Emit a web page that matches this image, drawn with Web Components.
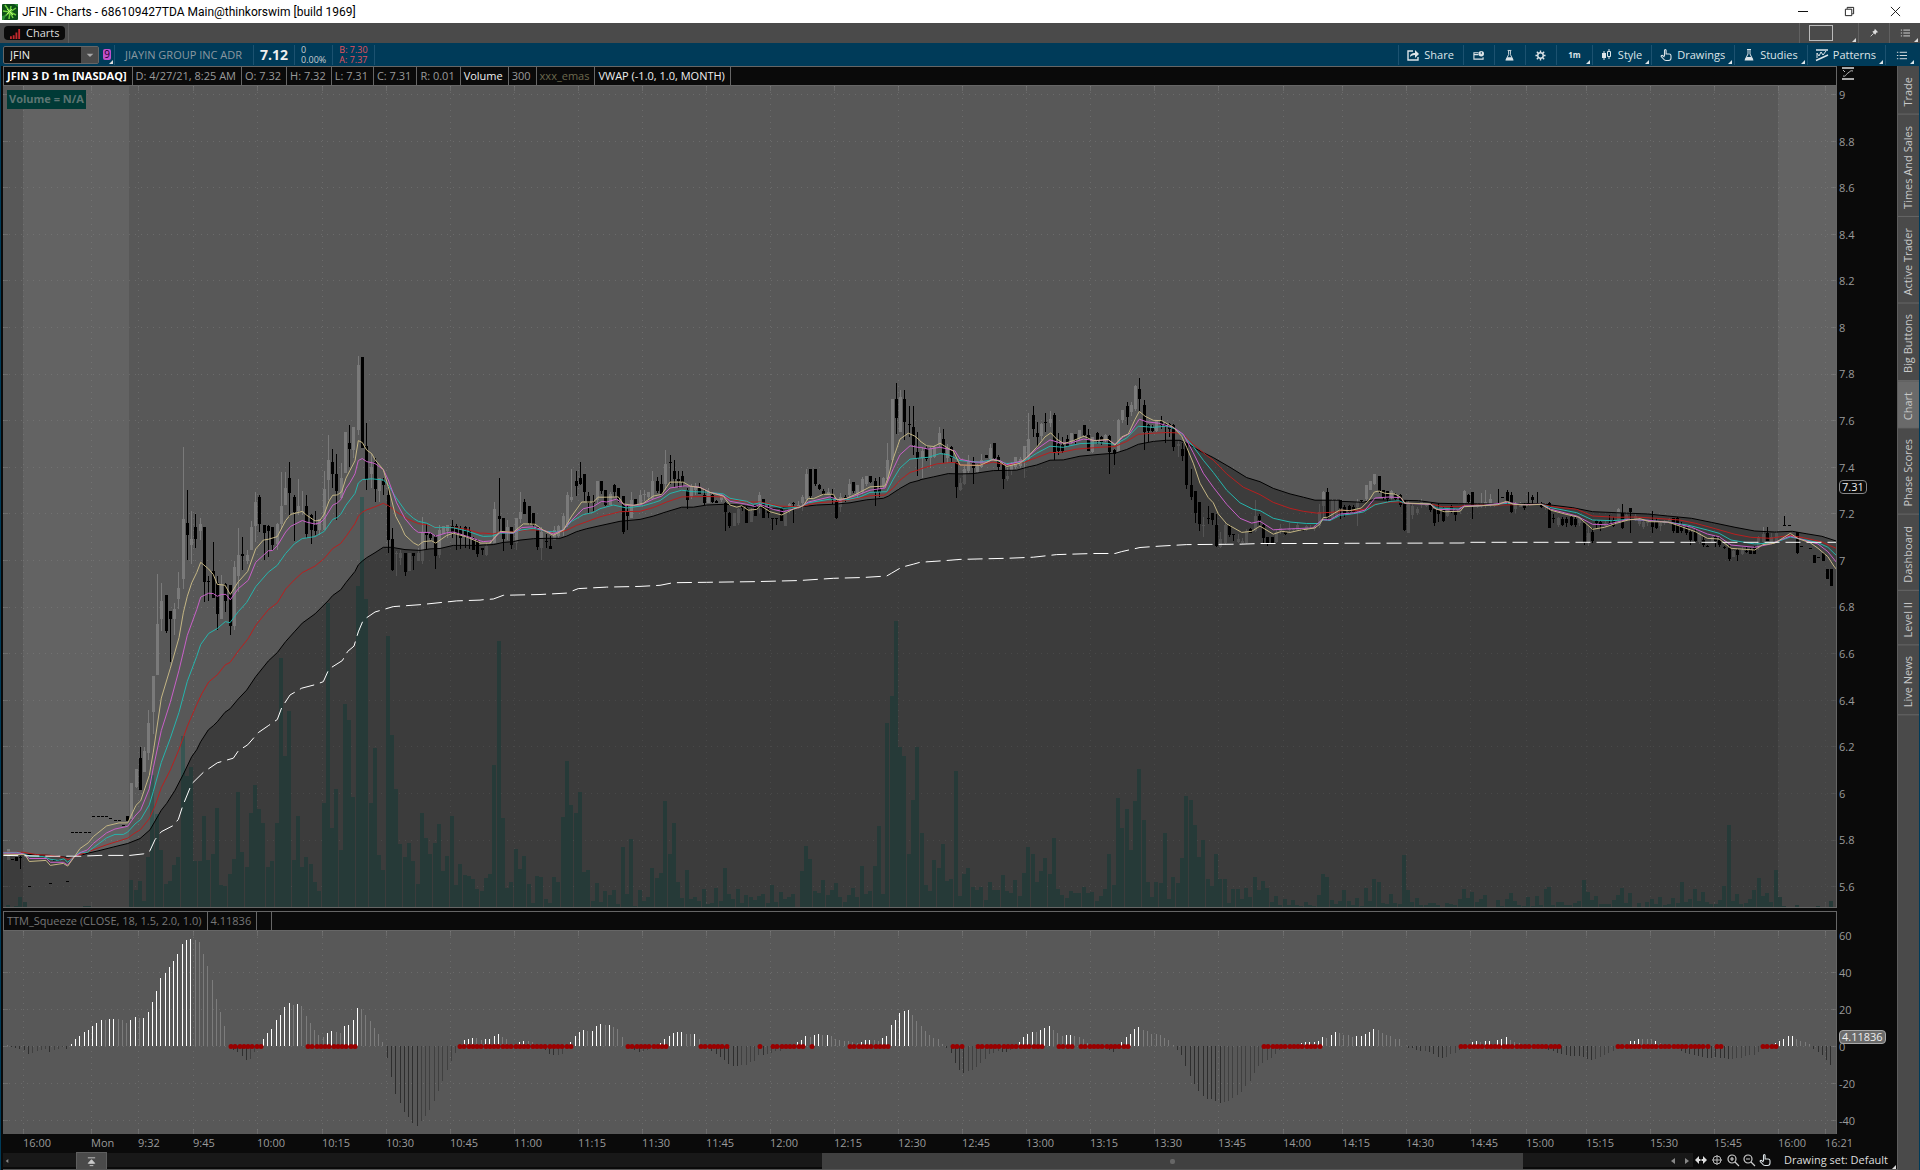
<!DOCTYPE html>
<html lang="en">
<head>
<meta charset="utf-8">
<title>JFIN - Charts</title>
<style>
  html, body { margin: 0; height: 100%; background: #0a0a0a; }
  body { font: 11px/14px "Open Sans", "Noto Sans", sans-serif; color: #9a9a9a; overflow: hidden; }
</style>
</head>
<body>
<trade-window></trade-window>

<script>
const ICONS = {
  logo: '<rect width="16" height="16" rx="1" fill="#0d4f18"/><path d="M8 8 3 1M8 8l1-6M8 8l6-4M8 8l6 3M8 8l3 6M8 8l-1 7M8 8l-5 4M8 8 1 7" stroke="#6fd23f" stroke-width="1.500"/><path d="M5 5l6 6M10 5l-5 5" stroke="#b9f27a" stroke-width="1"/><path d="M0 12l4-1-2 5H0zM12 0h4v3z" fill="#2b8f35"/>',
  bars: '<path d="M1 12v-3M4 12V8M7 12V5M10 12V1" stroke="#c2282d" stroke-width="2"/>',
  share: '<path d="M6 2H1v9h10V8" fill="none" stroke="#dce4e8" stroke-width="1.4"/><path d="M3 8c0-3 2-4 5-4V1l4 4-4 4V6C5 6 4 7 3 8z" fill="#dce4e8"/>',
  link: '<path d="M6 3H1v7h10V8M1 5h5" fill="none" stroke="#dce4e8" stroke-width="1.200"/><circle cx="9" cy="4" r="3" fill="#dce4e8"/><path d="M9 2v2.500" stroke="#003b59"/>',
  flask: '<path d="M4 .5h4M5 1v4L2.200 10.500h7.600L7 5V1" fill="none" stroke="#dce4e8"/><path d="M3.500 8h5l2 3.500h-9z" fill="#dce4e8"/>',
  gear: '<circle cx="6" cy="6" r="3" fill="none" stroke="#dce4e8" stroke-width="1.600"/><path d="M6 .5v2M6 9.500v2M.5 6h2M9.500 6h2M2 2l1.500 1.500M8.500 8.500 10 10M2 10l1.500-1.500M8.500 3.500 10 2" stroke="#dce4e8" stroke-width="1.500"/>',
  candles: '<path d="M3 2v9M8 0v10" stroke="#dce4e8"/><path d="M1 4h4v5H1z" fill="#dce4e8"/><path d="M6.500 2.500h3v5h-3z" fill="#003b59" stroke="#dce4e8"/>',
  hand: '<path d="M4.500 7V1.500q0-1 .8-1t.8 1V5h3q1.900 0 1.900 1.800V9q0 2.500-2.500 2.500H6Q4.500 11.500 3.500 10L1.200 7.500Q1 6.300 2.200 6.300L4.500 8" fill="none" stroke="#dce4e8" stroke-width="1.1"/>',
  patterns: '<path d="M0 1h12M0 11.500 12 6" stroke="#dce4e8" stroke-width="1.400"/><path d="M1 9V4l2 3 2-4 2 3 3-4" fill="none" stroke="#dce4e8"/>',
  menu: '<path d="M4 2.500h8M4 6h8M4 9.500h8" stroke="#e8e8e8"/><path d="M1 2.500h1.500M1 6h1.500M1 9.500h1.500" stroke="#e8e8e8"/>',
  pin: '<path d="M7 1l4 4-2 .5L7.500 8 4 4.500 6.500 3z" fill="#ddd"/><path d="M5.500 6.500 2 10" stroke="#ddd"/>',
  scale: '<path d="M0 1h12" stroke="#ddd" stroke-width="1.500"/><path d="M0 12h12" stroke="#aaa" stroke-width="2"/><path d="M1 9c3 1 3-2 5-3s2-3 5-2M1 3l2 2" fill="none" stroke="#bbb"/>',
  min: '<path d="M1 5.500h10" stroke="#111"/>',
  restore: '<path d="M1.500 3.500h7v7h-7zM3.500 3V1.500h7v7H9" fill="none" stroke="#111"/>',
  close: '<path d="M1 1l10 10M11 1 1 11" stroke="#111"/>',
  top: '<path d="M2 2h8M6 4 2.500 8h7zM4 10.500h4" stroke="#ccc" fill="#ccc"/>',
  expand: '<path d="M0 6l4-4v3h4V2l4 4-4 4V7H4v3z" fill="#ddd"/><path d="M6 2v8" stroke="#0a0a0a"/>',
  cross: '<circle cx="6" cy="6" r="4" fill="none" stroke="#bbb"/><path d="M6 1v10M1 6h10" stroke="#bbb"/>',
  zoomin: '<circle cx="5" cy="5" r="4" fill="none" stroke="#ccc" stroke-width="1.200"/><path d="M8 8l4 4M3 5h4M5 3v4" stroke="#ccc" stroke-width="1.200"/>',
  zoomout: '<circle cx="5" cy="5" r="4" fill="none" stroke="#ccc" stroke-width="1.200"/><path d="M8 8l4 4M3 5h4" stroke="#ccc" stroke-width="1.200"/>',
  left: '<path d="M8 3v6L4 6z" fill="#888"/>',
  right: '<path d="M4 3v6l4-3z" fill="#888"/>',
  down: '<path d="M1 4h10L6 9z" fill="#a8a8a8"/>'
};
const icon = (name, size = 12) =>
  `<svg class="icon" width="${size}" height="${size}" viewBox="0 0 ${name === 'logo' ? '16 16' : '12 12'}" aria-hidden="true">${ICONS[name]}</svg>`;

const BASE = `
  * { box-sizing: border-box; }
  button, input { font: inherit; color: inherit; background: none; border: 0; border-radius: 0; padding: 0; margin: 0; }
  .icon { display: block; flex: none; overflow: visible; }
`;

// ---- chart data -------------------------------------------------------
// Each block has its own origin (x, y) and scale (kx, ky).
// candles: "side x high top bottom low", g = up, b = down. volume: "x top".
const BLOCKS = [
  {
    x: 0, y: 320, kx: 3, ky: 2.613,
    black: '10,1396 80,1396 150,1399 200,1404 240,1399 265,1393 300,1386 340,1377 383,1368 420,1355 450,1332 484,1281 500,1263 525,1229 550,1187 575,1141 590,1123 602,1102 625,1071 640,1060 652,1050 675,1025 690,1016 715,990 740,967 767,932 805,891 832,869 857,840 883,815 907,792 945,768 984,734 998,720 1022,705 1038,686 1065,657 1075,640 1087,630 1100,621 1125,608 1150,594 1175,594 1215,600 1260,602 1290,598 1320,597 1360,589 1440,589',
    red: '10,1390 70,1391 110,1397 150,1399 190,1404 204,1410 222,1403 260,1391 320,1371 383,1354 400,1343 422,1331 448,1303 465,1270 484,1222 511,1176 537,1122 562,1062 590,1005 605,977 626,946 652,927 676,901 690,895 715,865 745,832 767,798 805,757 832,739 857,703 883,679 907,660 945,643 973,623 998,597 1022,584 1040,563 1065,532 1075,513 1087,502 1100,496 1125,488 1150,479 1165,485 1190,502 1225,521 1255,532 1280,535 1310,542 1360,542 1400,547 1440,557',
    cyan: '10,1391 50,1391 75,1396 90,1401 130,1402 150,1409 175,1412 192,1408 203,1417 225,1400 240,1391 262,1391 280,1379 320,1353 345,1344 370,1344 383,1338 405,1317 422,1305 448,1267 460,1232 484,1156 511,1093 537,1025 562,944 590,879 602,848 626,819 652,806 676,788 690,791 715,762 740,738 767,697 805,659 832,641 857,610 883,585 907,571 945,566 973,552 998,521 1012,516 1022,508 1038,484 1065,453 1075,426 1087,417 1115,415 1150,418 1165,431 1187,463 1217,500 1240,518 1255,526 1280,531 1305,542 1335,542 1360,543 1400,551 1440,563',
    magenta: '10,1393 60,1393 75,1397 88,1407 140,1407 151,1417 190,1417 203,1424 222,1403 245,1390 262,1385 280,1368 320,1340 345,1330 383,1323 405,1296 422,1280 448,1225 460,1170 484,1073 511,999 537,915 562,824 590,757 602,724 626,714 640,715 652,722 665,717 678,717 691,731 715,702 745,680 767,633 805,603 818,602 832,590 857,554 872,539 907,524 920,528 945,533 960,530 973,520 998,484 1012,478 1022,470 1038,440 1050,425 1065,402 1075,367 1087,362 1100,370 1125,375 1150,391 1165,418 1190,478 1215,519 1240,545 1255,555 1290,555 1307,565 1340,556 1360,554 1400,565 1440,577',
    tan: '10,1396 75,1397 88,1415 138,1412 151,1425 190,1420 203,1427 222,1404 240,1381 265,1366 280,1350 320,1322 357,1314 383,1314 408,1268 422,1256 448,1190 460,1129 484,988 511,910 537,830 550,765 562,722 575,687 590,660 602,633 626,651 640,665 652,691 675,693 691,717 715,684 743,657 767,598 790,575 805,573 832,566 857,524 872,508 907,500 920,510 945,525 960,523 973,507 987,473 998,458 1012,457 1025,449 1038,413 1050,393 1065,368 1075,315 1087,320 1100,340 1115,349 1125,365 1150,391 1165,436 1187,513 1202,537 1215,562 1240,582 1255,589 1270,579 1295,577 1307,583 1340,563 1360,557 1400,567 1440,582',
    vwap: '10,1399 150,1401 240,1401 300,1399 390,1399 430,1395 448,1390 465,1358 484,1337 520,1321 535,1305 548,1270 575,1212 610,1182 652,1157 700,1145 715,1126 743,1110 775,1078 805,1060 832,1044 845,1013 870,980 905,962 945,953 970,945 987,912 1027,890 1043,866 1062,852 1075,815 1090,784 1125,763 1180,749 1260,744 1370,734 1440,732',
    candles: `g 25 1381 1383 1412 1412;b 38 1409 1409 1411 1411;b 49 1402 1402 1413 1413;b 62 1400 1404 1406 1435;
      b 88 1479 1479 1482 1482;b 151 1471 1471 1474 1474;b 203 1466 1466 1469 1469;b 163 1411 1411 1414 1414;b 176 1411 1411 1414 1414;
      b 216 1338 1338 1341 1341;b 229 1338 1338 1341 1341;b 242 1338 1338 1341 1341;b 255 1338 1338 1341 1341;b 268 1338 1338 1341 1341;
      b 281 1296 1296 1299 1299;b 294 1296 1296 1299 1299;b 307 1296 1296 1299 1299;b 319 1296 1296 1299 1299;b 332 1301 1301 1304 1304;b 345 1306 1306 1309 1309;b 357 1307 1307 1310 1310;b 370 1319 1319 1322 1322;b 382 1296 1296 1309 1309;
      g 394 1210 1210 1305 1305;g 409 1173 1173 1220 1224;b 421 1115 1145 1227 1227;g 433 1117 1126 1180 1180;g 446 1018 1053 1131 1150;g 461 930 930 1023 1083;g 472 665 794 927 927;g 484 686 734 780 812;b 499 719 719 813 817;b 511 760 760 780 894;g 523 740 755 780 822;g 535 658 700 729 755;g 550 331 520 676 704;b 562 445 531 562 628;g 574 500 572 588 638;b 586 507 541 571 595;g 601 517 533 551 575;b 613 541 541 685 738;b 625 670 683 685 735;b 640 579 656 726 726;b 652 668 688 768 811;g 664 667 690 780 780;b 676 688 690 735 763;b 691 692 692 800 822;g 703 630 645 800 810;g 715 543 613 669 711;b 727 568 612 616 654;g 742 600 613 630 638;g 754 526 541 601 601;g 766 450 476 538 580;b 778 458 463 533 554;b 793 535 535 556 628;b 805 536 537 552 619;b 817 541 541 588 602;g 832 530 533 585 602;g 844 396 486 534 546;g 856 398 439 484 484;b 868 372 413 451 515;b 883 458 463 502 578;g 895 415 486 499 510;g 907 446 500 502 510;b 919 458 486 559 570;b 934 508 510 550 586;b 946 500 536 551 563;g 958 520 520 550 562;g 973 394 442 550 550;g 985 300 366 417 471;b 997 336 371 402 440;b 1009 350 402 447 523;g 1025 373 413 465 465;g 1036 293 293 399 399;b 1048 275 321 336 385;g 1060 280 280 340 360;g 1075 93 118 287 300;b 1087 97 97 334 334;b 1099 268 330 416 445;g 1114 348 383 402 440;b 1126 360 370 442 476;g 1138 414 414 446 475;b 1150 413 421 430 458;b 1165 433 458 575 608;b 1177 543 572 653 657;g 1189 604 608 610 670;g 1201 602 608 622 640;b 1216 609 609 658 670;g 1228 610 610 657 657;b 1240 609 609 616 652;g 1255 595 608 630 630;g 1267 514 555 630 638;b 1279 534 557 562 600;b 1291 555 560 570 575;b 1306 562 566 616 651;g 1318 535 549 615 622;g 1330 537 537 559 559;g 1342 536 536 552 570;b 1357 523 537 555 570;b 1369 532 539 560 600;b 1381 537 544 570 598;b 1396 538 541 568 597;b 1408 541 552 570 598;b 1420 568 570 600 600;b 1432 571 575 612 620`,
    volume: '25 1529,49 1530,61 1508,75 1521,255 1531,267 1531,393 1462,408 1490,420 1466,432 1518,444 1403,457 1190,470 1290,483 1385,498 1473,510 1466,522 1424,534 1403,549 1088,561 1192,573 1168,586 1414,599 1414,612 1295,625 1412,638 1396,651 1276,663 1476,674 1480,690 1448,703 1409,714 1233,726 1390,740 1429,754 1287,765 1216,777 1278,790 1315,804 1430,817 1414,831 1315,843 882,856 1139,867 1022,881 1411,894 1295,907 1430,919 1403,932 1422,945 1469,957 1492,972 1262,984 739,996 1328,1008 1226,1023 1385,1035 1004,1047 1046,1059 1247,1074 694,1086 463,1098 730,1113 1262,1125 1119,1137 1398,1149 1437,1164 826,1176 1085,1188 1226,1200 1369,1215 1403,1227 1367,1240 1414,1254 1474,1266 1287,1278 1354,1291 1396,1306 1367,1317 1316,1330 1440,1342 1401,1356 1297,1368 1477,1380 1422,1394 1450,1408 1453,1419 1461,1431 1487'
  },
  {
    x: 440, y: 340, kx: 3, ky: 2.703,
    black: '130,554 160,553 190,547 220,545 240,541 280,537 320,536 360,536 380,530 410,518 440,510 480,502 540,490 600,485 640,476 680,464 725,452 760,452 800,446 850,444 900,446 940,452 990,455 1060,453 1090,450 1130,446 1180,444 1230,440 1280,432 1330,428 1345,422 1380,401 1410,386 1440,379',
    red: '130,522 160,524 185,519 225,519 260,513 310,514 340,522 360,519 380,514 410,501 440,491 480,478 540,464 600,463 640,453 680,438 725,424 800,423 850,424 880,432 920,438 960,438 1020,449 1080,451 1130,440 1200,436 1240,430 1290,421 1335,419 1360,400 1380,379 1410,358 1440,350',
    cyan: '130,531 155,530 180,522 220,522 240,514 280,509 320,517 350,519 370,513 395,490 430,472 460,466 480,456 520,446 560,454 610,448 640,440 660,434 690,415 725,406 760,410 800,411 850,416 870,428 920,436 940,444 960,440 1000,448 1030,455 1080,452 1105,440 1170,430 1220,432 1260,424 1290,412 1340,410 1360,376 1380,346 1410,322 1440,319',
    magenta: '130,545 155,543 180,520 220,522 245,507 280,505 310,514 340,524 370,513 395,487 430,456 460,450 485,436 500,438 530,430 555,447 600,446 640,430 665,422 690,400 735,394 780,398 810,412 850,420 870,436 920,444 945,450 960,444 1000,458 1030,464 1080,452 1105,438 1170,424 1200,433 1250,420 1290,406 1335,400 1360,348 1380,310 1410,286 1440,291',
    tan: '120,549 150,549 180,517 220,520 250,497 285,498 310,514 340,528 370,514 395,476 425,438 460,438 475,425 500,425 535,424 550,443 580,447 610,441 640,422 665,417 690,384 730,384 750,395 780,399 810,412 850,422 870,446 890,452 905,448 925,460 950,458 962,448 990,464 1025,473 1060,457 1090,448 1105,428 1120,429 1150,417 1180,417 1190,432 1220,428 1250,416 1290,397 1335,395 1345,370 1360,320 1380,268 1405,252 1425,260 1440,272',
    vwap: '130,702 160,700 190,690 300,688 380,684 415,672 500,668 600,666 660,663 700,656 800,655 950,653 1080,650 1180,644 1270,642 1340,638 1355,630 1385,614 1420,606 1440,601',
    candles: `b 126 562 562 568 582;g 138 550 558 580 585;g 151 540 545 550 551;g 163 438 457 548 548;b 178 374 476 484 520;b 190 481 481 538 570;g 202 487 506 520 541;b 214 506 506 553 565;g 229 481 481 550 568;g 241 411 465 485 494;b 253 430 438 470 470;b 268 449 449 496 500;b 280 468 468 500 505;b 292 505 505 560 568;g 304 505 520 562 596;b 319 525 543 546 562;b 331 530 557 565 565;g 343 502 514 541 541;g 356 500 502 530 536;g 370 468 475 515 530;g 382 411 419 500 505;g 394 349 424 432 438;b 409 355 381 395 422;b 421 330 373 388 393;b 433 362 362 411 436;b 445 411 422 440 468;b 460 420 438 441 462;g 472 381 381 433 440;b 484 381 381 407 415;b 496 406 406 445 448;g 511 411 417 445 445;b 523 388 392 412 425;b 535 400 400 430 438;b 550 422 422 520 524;b 562 446 465 476 514;g 574 411 432 480 480;b 586 430 430 447 447;g 601 406 418 440 445;g 613 406 415 420 436;g 625 411 411 425 430;g 637 355 381 430 430;b 652 371 380 407 414;b 664 364 390 417 417;g 676 298 335 390 406;b 691 311 329 332 388;b 703 325 354 377 396;b 715 354 376 380 400;b 727 354 367 385 398;b 742 400 405 433 458;g 754 388 395 425 430;g 766 387 395 405 418;b 778 387 400 416 416;b 793 405 420 441 445;g 805 400 410 440 440;b 817 417 420 438 440;b 829 433 434 440 441;g 843 415 420 433 438;b 856 438 441 465 516;b 868 465 468 503 507;g 883 468 468 503 503;g 895 455 457 495 500;b 907 445 448 455 462;b 919 450 453 496 496;g 934 455 461 492 492;b 946 445 447 475 476;g 958 411 418 440 468;b 970 430 430 480 481;b 985 446 460 468 481;b 997 480 480 482 514;b 1009 480 482 484 500;b 1024 455 458 488 488;g 1036 460 462 503 503;g 1048 440 442 460 468;b 1060 438 441 444 495;g 1075 436 445 448 458;g 1087 420 425 440 462;g 1099 349 362 430 436;b 1111 349 349 422 430;b 1126 349 349 389 395;b 1138 388 393 403 406;b 1150 403 407 416 420;g 1164 400 412 416 418;b 1178 403 415 430 443;b 1190 430 438 481 484;g 1202 414 425 452 464;b 1216 420 424 430 438;g 1229 375 390 420 425;b 1241 385 385 408 414;g 1253 391 391 420 425;g 1267 371 376 411 416;g 1279 368 368 390 395;b 1291 368 368 385 387;b 1306 374 381 411 450;b 1318 370 402 411 425;g 1330 369 373 395 400;g 1342 279 324 375 385;g 1357 160 160 324 330;b 1369 116 160 211 254;g 1381 136 154 250 250;b 1393 136 160 222 270;b 1408 179 228 230 262;b 1420 179 235 284 311;b 1432 250 302 318 368`,
    volume: '126 1490,138 1455,150 1444,162 1150,177 814,189 1292,201 1480,213 1466,228 1376,240 1430,252 1396,267 1471,279 1522,291 1449,303 1452,318 1511,330 1522,342 1452,354 1466,369 1290,381 1138,393 1257,408 1279,420 1222,432 1438,444 1433,459 1517,471 1468,483 1518,495 1490,510 1500,522 1487,534 1525,549 1371,561 1498,573 1350,586 1529,600 1487,612 1517,624 1506,636 1428,651 1454,663 1441,675 1246,690 1390,702 1306,714 1466,726 1509,741 1433,753 1511,765 1506,777 1517,792 1484,804 1525,816 1522,828 1481,843 1517,855 1427,867 1498,879 1511,894 1484,906 1522,918 1500,933 1506,945 1514,957 1503,969 1498,984 1522,996 1473,1008 1520,1023 1492,1035 1511,1047 1506,1059 1498,1086 1436,1098 1368,1110 1403,1125 1490,1137 1495,1149 1460,1164 1500,1176 1487,1188 1468,1200 1506,1215 1520,1227 1500,1239 1481,1251 1506,1266 1422,1278 1498,1291 1490,1305 1422,1317 1314,1329 1498,1341 1035,1356 962,1368 760,1380 1100,1392 1125,1407 1390,1419 1244,1431 1100'
  },
  {
    x: 860, y: 340, kx: 3, ky: 2.703,
    black: '180,378 220,370 265,361 300,362 340,361 400,353 470,352 500,344 530,338 570,325 610,324 660,314 720,309 765,306 800,296 835,282 880,274 920,271 960,271 985,281 1020,300 1060,318 1110,344 1160,372 1200,383 1240,401 1290,416 1330,425 1365,433 1440,433',
    red: '180,349 230,335 270,331 285,331 300,338 350,339 400,330 440,338 490,331 530,318 570,304 600,304 650,295 720,290 765,288 800,274 835,255 880,252 920,250 950,251 970,256 1000,282 1040,312 1060,325 1100,362 1150,398 1200,418 1240,439 1290,455 1330,463 1370,468 1410,466 1440,464',
    cyan: '180,319 205,317 240,307 265,310 300,326 360,330 400,323 440,334 490,329 530,306 570,287 610,290 660,280 720,278 765,282 800,265 835,233 880,236 920,233 945,240 970,258 1000,288 1030,325 1060,358 1100,406 1140,440 1180,458 1200,461 1240,482 1290,492 1340,496 1375,496 1390,486 1410,488 1440,474',
    magenta: '180,290 205,295 240,290 270,296 285,300 300,322 340,330 380,330 400,323 420,326 440,337 490,326 530,295 570,270 600,278 630,279 670,268 710,272 745,270 765,282 790,262 810,252 838,214 860,221 895,225 940,236 970,255 1000,305 1030,360 1060,398 1100,444 1140,482 1175,495 1200,490 1240,513 1280,511 1360,508 1385,486 1410,486 1440,470',
    tan: '180,273 200,286 222,288 240,279 265,293 280,300 300,338 360,339 395,324 415,326 440,342 480,333 500,318 530,290 555,262 572,251 590,268 612,280 640,272 672,260 700,272 745,269 765,284 785,262 805,254 825,215 838,193 855,206 880,217 905,218 940,236 965,260 980,290 1000,333 1020,387 1045,426 1060,440 1075,470 1100,497 1145,520 1175,517 1200,503 1240,525 1265,517 1290,520 1320,514 1365,508 1380,497 1390,480 1403,479 1440,459',
    vwap: '180,601 260,596 300,593 440,590 520,587 590,580 700,577 765,577 785,572 840,561 900,557 980,553 1140,552 1200,550 1440,550',
    candles: `g 187 290 300 318 373;b 199 287 291 322 326;g 211 290 295 318 345;g 223 285 290 315 320;g 238 236 252 285 290;b 250 240 268 306 332;g 262 280 292 318 332;b 274 287 290 320 330;b 289 330 330 396 426;g 301 373 387 405 407;g 313 340 350 390 393;g 325 312 328 355 360;b 340 317 333 346 388;g 352 335 337 357 360;g 364 308 325 343 346;b 379 310 312 319 320;g 391 280 293 322 324;b 403 279 279 320 322;b 415 311 316 343 355;b 430 330 333 376 402;g 442 345 368 376 381;g 454 330 334 352 365;g 466 317 317 342 350;g 481 317 322 340 345;g 493 287 287 325 374;g 505 198 268 322 325;b 520 179 203 241 262;b 532 222 252 262 290;g 544 224 226 260 270;b 556 198 221 224 248;g 571 193 213 224 235;b 583 198 203 306 325;b 595 252 280 300 311;b 607 262 285 299 306;b 622 257 268 286 290;g 634 252 252 275 280;b 646 253 253 270 280;g 658 244 244 266 270;b 673 230 230 257 262;b 685 240 257 299 300;g 697 262 262 304 306;b 712 249 252 270 280;b 724 260 262 276 285;g 736 254 258 270 276;b 748 258 260 302 363;b 763 295 298 307 337;g 775 214 216 302 304;g 787 188 190 216 225;b 802 168 178 208 230;g 814 168 175 194 205;g 826 122 124 186 192;b 838 103 132 160 195;b 853 162 176 250 298;b 865 228 230 245 275;b 877 230 238 245 248;g 889 215 220 246 250;b 904 206 218 230 240;b 916 225 228 232 278;b 928 223 228 240 262;b 940 226 230 290 300;g 955 274 282 287 316;b 967 278 295 314 327;b 979 278 280 393 403;b 994 349 392 425 433;b 1006 407 408 467 495;b 1018 438 438 497 516;g 1030 478 500 502 533;b 1045 450 481 484 497;b 1057 468 468 486 500;b 1069 471 500 557 559;g 1081 520 538 560 563;g 1096 492 500 550 555;b 1108 500 501 527 532;b 1120 524 524 526 543;g 1135 524 538 546 550;g 1147 535 542 549 552;g 1159 510 515 550 552;b 1171 508 510 522 522;g 1186 432 476 515 520;b 1198 470 477 486 500;b 1210 495 500 535 551;b 1222 533 533 549 557;b 1237 533 533 550 551;g 1249 514 518 546 550;g 1261 497 508 515 525;b 1275 516 519 524 526;g 1288 495 510 514 520;g 1300 508 511 514 516;g 1312 495 500 513 516;b 1328 510 511 515 517;g 1338 500 502 513 515;g 1352 500 508 510 512;g 1364 500 502 511 515;g 1378 444 466 502 508;g 1390 408 411 450 480;b 1402 400 411 482 488;g 1416 430 432 480 485;g 1428 430 432 475 480`,
    volume: '186 1333,198 1473,210 1490,222 1406,237 1427,249 1363,261 1463,273 1457,288 1165,300 1503,312 1444,324 1427,339 1479,351 1487,363 1479,378 1514,390 1466,402 1487,414 1487,429 1446,441 1490,453 1495,465 1460,480 1503,492 1441,504 1371,519 1390,531 1466,543 1436,555 1400,570 1444,582 1346,594 1484,606 1500,621 1509,633 1490,645 1495,658 1495,672 1479,684 1495,696 1492,711 1517,723 1503,736 1484,747 1390,762 1473,774 1238,786 1319,801 1268,813 1379,825 1246,837 1160,852 1298,864 1466,876 1506,888 1466,902 1468,915 1333,927 1511,939 1452,954 1468,966 1400,978 1233,993 1244,1005 1311,1017 1398,1029 1352,1044 1457,1056 1476,1068 1390,1081 1457,1095 1457,1107 1522,1120 1484,1133 1484,1146 1511,1158 1481,1170 1506,1185 1452,1197 1487,1209 1463,1221 1481,1236 1520,1248 1503,1260 1528,1275 1511,1287 1526,1299 1514,1311 1528,1324 1530,1338 1520,1350 1528,1362 1530,1377 1500,1389 1444,1401 1452,1416 1514,1428 1525'
  },
  {
    x: 1300, y: 440, kx: 2.529, ky: 3,
    black: '102,184 160,187 185,179 220,180 300,182 350,190 400,191 500,192 610,191 640,196 690,203 740,215 800,218 880,222 930,228 990,235 1040,247 1100,262 1150,273 1200,276 1245,274 1280,281 1320,289 1356,303',
    red: '102,211 140,212 165,207 190,192 230,186 250,186 265,190 330,192 360,200 400,200 420,196 500,195 610,193 640,200 700,208 740,228 800,232 850,231 900,235 960,240 1000,250 1050,266 1100,283 1140,292 1190,295 1240,286 1280,295 1320,306 1356,325',
    cyan: '102,226 130,222 160,216 190,194 230,184 250,182 265,190 330,192 345,204 400,207 415,199 460,197 525,190 560,194 610,193 635,203 700,218 740,240 790,242 830,238 880,241 940,248 980,255 1030,270 1060,280 1090,300 1150,312 1200,308 1240,291 1280,300 1310,308 1335,322 1356,346',
    magenta: '102,222 140,218 165,210 190,174 225,171 255,173 265,190 330,193 345,208 400,210 415,198 460,197 525,187 560,194 610,193 635,208 700,228 740,253 775,254 830,238 880,241 940,248 990,262 1030,282 1060,290 1090,315 1150,322 1190,312 1240,288 1280,302 1310,312 1335,335 1356,366',
    tan: '102,210 125,212 155,204 175,180 188,156 200,153 215,160 240,162 255,172 265,189 330,192 340,205 365,215 405,214 415,200 460,197 500,194 522,184 540,193 575,195 610,193 635,211 670,222 705,232 740,268 770,262 800,250 830,240 860,236 885,245 930,246 960,258 1000,275 1030,295 1060,297 1090,325 1150,330 1170,314 1200,310 1240,280 1260,296 1290,308 1310,325 1335,350 1350,378 1356,387',
    vwap: '102,310 410,309 430,307 1356,307',
    candles: `b 102 180 180 205 236;b 113 195 200 222 230;b 124 195 198 215 220;b 135 196 200 215 222;g 146 178 185 200 257;b 156 180 181 184 186;g 168 135 135 178 184;g 178 123 123 150 150;g 189 102 102 131 135;b 201 108 108 152 160;b 211 150 150 175 180;b 221 152 152 178 185;g 231 150 152 175 182;b 241 160 165 178 182;b 253 163 165 195 200;b 264 180 180 271 273;g 274 180 190 278 279;g 285 190 198 225 236;g 297 200 208 218 225;g 308 178 185 195 205;g 320 190 190 197 202;b 330 190 190 210 215;b 340 205 208 250 258;b 350 190 210 222 246;b 362 200 204 244 246;g 373 204 210 228 232;b 383 195 200 212 218;b 393 208 211 224 242;g 405 200 205 212 222;g 415 150 152 190 195;b 425 163 165 186 190;b 436 155 155 198 236;g 448 190 192 200 205;g 459 160 190 198 205;g 470 150 185 196 205;g 482 162 178 196 200;g 492 190 192 198 200;b 502 148 188 190 192;b 512 171 171 174 175;b 524 150 157 182 192;b 535 155 165 216 220;g 546 186 194 208 220;g 557 186 190 200 202;b 568 190 195 204 210;b 578 155 190 195 198;b 588 165 171 180 196;b 600 155 190 194 196;b 610 186 192 200 205;g 621 190 195 200 210;b 631 186 190 264 265;b 642 222 234 238 250;g 653 230 235 256 260;b 663 230 236 254 258;b 674 230 236 250 260;b 686 225 232 256 258;b 696 228 238 254 260;g 707 228 232 250 258;b 719 245 250 308 316;g 729 260 280 308 318;b 740 265 275 304 308;b 751 240 242 250 265;b 761 243 247 253 272;g 772 244 248 258 262;b 783 225 248 254 258;b 793 230 240 258 262;g 805 205 207 240 245;b 815 192 218 264 266;g 826 215 224 240 243;b 836 204 204 216 278;g 848 218 228 240 244;g 858 234 238 252 258;g 869 238 246 260 266;g 880 240 244 250 258;b 891 214 240 262 280;b 902 234 242 264 268;g 912 243 248 258 272;g 922 240 243 250 255;g 934 235 238 245 252;b 945 234 234 272 278;b 955 232 234 278 280;b 966 245 255 272 278;b 977 258 262 280 286;b 988 270 275 300 316;b 999 266 275 304 306;g 1010 275 280 305 312;b 1021 290 300 316 320;b 1031 316 317 319 322;g 1042 285 290 305 308;b 1052 285 292 302 320;b 1062 290 300 316 320;b 1073 318 320 324 326;b 1086 315 325 358 362;g 1096 330 334 350 352;b 1106 325 330 344 362;g 1118 320 330 342 345;b 1128 318 332 335 340;b 1139 325 330 341 342;b 1149 318 325 342 342;g 1160 288 292 325 330;g 1171 262 282 305 315;b 1182 262 280 302 304;g 1192 278 290 312 315;g 1204 272 280 305 308;b 1225 228 255 258 258;b 1238 255 255 258 258;b 1258 275 277 340 342;b 1269 319 319 322 322;b 1291 324 324 327 327;b 1301 345 345 368 368;b 1312 351 351 354 354;b 1323 338 338 362 362;b 1334 387 387 416 416;b 1344 387 387 437 437`,
    volume: '101 1382,111 1350,124 1383,135 1395,144 1374,156 1397,167 1344,176 1383,187 1317,200 1326,210 1388,220 1392,230 1362,241 1388,252 1391,262 1245,272 1350,284 1386,296 1374,306 1395,318 1395,330 1388,340 1388,350 1395,372 1388,382 1391,392 1394,405 1377,415 1347,425 1375,435 1356,447 1385,457 1377,467 1365,501 1380,512 1397,523 1377,534 1359,544 1382,555 1395,566 1397,577 1371,588 1397,599 1368,609 1395,621 1347,630 1341,641 1395,652 1386,662 1386,673 1395,684 1395,695 1388,706 1382,718 1320,728 1356,738 1380,749 1368,760 1392,771 1392,782 1392,793 1380,804 1365,814 1344,825 1388,835 1359,857 1388,878 1386,890 1377,900 1391,911 1371,922 1394,932 1392,943 1374,955 1388,966 1326,976 1386,987 1377,998 1347,1008 1382,1018 1356,1030 1385,1040 1391,1052 1392,1062 1380,1072 1338,1084 1155,1094 1382,1105 1362,1116 1391,1127 1388,1138 1377,1148 1350,1160 1314,1171 1368,1181 1359,1192 1386,1204 1290,1214 1370,1224 1397,1258 1395,1310 1397,1343 1383'
  }
];

// squeeze histogram: w/g above zero rising/falling, d/e below zero falling/rising
const HISTOGRAM = [
  { x: 0, kx: 2.376, bars: 'g17 435,d27 441,d37 443,d47 446,d58 449,d68 461,e77 458,e89 453,e98 450,e108 448,d117 456,e129 450,e138 447,e148 441,d158 447,w170 432,w179 417,w189 408,w200 396,w210 390,w220 378,w229 369,w241 360,g250 360,w260 357,w270 357,g282 357,g291 360,g300 369,w310 360,w322 351,g331 354,w341 354,w352 336,w362 306,w372 273,w381 234,w393 219,w403 201,w412 183,w422 162,w433 132,w443 120,w452 117,g464 120,g474 126,g484 162,g493 198,g505 240,g515 297,g524 336,g533 378,d555 450,d565 456,d576 468,d585 480,e595 477,e605 456,w626 417,w635 399,w645 387,w657 360,w666 345,w676 321,w688 309,g697 315,w707 312,g716 318,g728 348,g738 369,g747 390,g757 405,g769 411,w778 399,w787 393,g799 396,g809 399,w818 378,w828 375,w840 360,w849 324,g859 327,g869 345,g880 363,g890 384,g899 402,g909 426,d920 474,d930 531,d939 582,d951 609,d961 636,d970 651,d980 669,d992 678,e1002 663,e1011 648,e1020 630,e1032 603,e1042 573,e1051 543,e1063 510,e1072 483,e1082 459,w1103 420,w1113 417,w1122 414,g1132 414,g1144 420,w1153 417,w1163 417,w1175 408,w1184 402,g1194 411,g1203 417,w1234 426,w1244 423,g1256 423,g1265 426,d1296 450,d1306 461,d1315 465,e1327 465,e1337 461,w1356 426,w1367 408,w1377 396,w1386 390,g1396 393,w1408 393,w1417 378,w1427 372,g1438 375,w1448 375,g1457 381,g1467 387,g1479 411,d1508 450,d1519 456' },
  { x: 640, kx: 2.376, bars: 'e8 453,e18 449,w49 429,w58 417,w70 408,w79 399,w89 396,w98 396,g110 402,g120 402,w129 402,g141 417,d170 452,d182 461,d191 471,d201 480,d210 492,d222 498,d231 498,e241 495,e253 495,e262 486,e272 483,e281 465,d293 465,e303 461,e312 458,e322 453,e334 452,w374 426,w383 420,w393 408,g405 411,w414 405,w424 402,g433 405,w445 405,g455 408,g464 417,g474 420,g486 423,g495 423,g505 426,g517 429,w526 426,w536 420,w545 420,g557 420,g566 423,w576 414,w585 408,w597 375,w607 360,w616 339,w628 333,w638 330,g647 345,g657 363,g669 378,g678 393,g687 405,g697 414,g709 417,g718 432,d728 443,d740 459,d749 489,d759 510,d768 519,e780 513,e790 510,e799 501,e809 489,e821 477,e830 461,e840 459,e851 453,d861 456,d871 456,e880 450,w901 426,w911 411,w920 402,w932 396,g942 396,w951 390,w961 384,w973 378,g982 390,g992 399,g1003 407,w1013 405,w1023 405,g1032 408,g1044 411,g1053 417,g1063 429,d1115 450,d1125 456,w1144 426,w1156 411,w1165 402,w1175 387,w1184 381,g1196 390,g1206 393,g1215 402,g1227 402,g1236 405,g1246 414,g1256 420,g1267 435,d1277 450,d1286 465,d1296 498,d1308 528,d1317 552,d1327 573,d1339 588,d1348 597,d1358 597,d1367 603,d1379 609,e1388 606,e1398 603,e1408 594,e1420 585,e1429 576,e1438 558,e1450 543,e1460 519,e1469 498,e1479 489,e1491 480,e1500 474,e1510 461,e1520 449' },
  { x: 1280, kx: 2.45, bars: 'w52 429,w62 426,w72 426,w85 426,w94 423,w104 411,g114 414,w126 405,w136 396,g146 399,g155 405,g168 405,g178 411,w187 408,w199 408,w209 402,w219 396,w229 387,g241 390,g251 399,g261 405,g271 408,g283 417,g293 417,d315 444,d325 444,d334 450,d344 453,e356 453,d366 456,d376 461,d388 471,d398 474,e408 471,e418 461,e430 458,e440 450,w471 426,w481 423,g491 427,w503 423,w513 423,w533 420,w543 417,w555 411,g565 420,g575 426,g587 429,d657 450,d670 453,d680 458,d690 461,d702 465,d711 468,d722 468,d733 468,d743 471,d753 477,d763 480,e773 477,e785 471,e795 465,e805 458,e817 452,w858 423,w868 423,w878 417,g888 417,g900 417,g910 417,w920 423,g932 430,d984 453,d993 458,d1003 461,d1015 465,d1025 468,d1036 471,d1047 474,d1057 474,d1067 471,d1079 474,d1089 474,d1099 477,e1109 477,e1119 474,e1131 474,e1141 468,e1150 465,e1162 465,e1173 456,w1213 430,w1223 423,w1233 417,w1246 408,w1256 408,g1265 417,g1275 423,g1287 426,g1297 432,d1307 447,d1320 456,d1329 465,d1339 480,d1348 495' }
];
const SQUEEZE = [[231, 262], [308, 356], [460, 572], [628, 667], [701, 727], [760, 761], [773, 804], [812, 813], [850, 889], [953, 962], [978, 1043], [1059, 1073], [1081, 1129], [1264, 1322], [1461, 1560], [1618, 1709], [1717, 1722], [1763, 1778]];

const TIMES = [[23, '16:00'], [91, 'Mon'], [138, '9:32'], [193, '9:45'], [257, '10:00'], [322, '10:15'], [386, '10:30'], [450, '10:45'], [514, '11:00'], [578, '11:15'], [642, '11:30'], [706, '11:45'], [770, '12:00'], [834, '12:15'], [898, '12:30'], [962, '12:45'], [1026, '13:00'], [1090, '13:15'], [1154, '13:30'], [1218, '13:45'], [1283, '14:00'], [1342, '14:15'], [1406, '14:30'], [1470, '14:45'], [1526, '15:00'], [1586, '15:15'], [1650, '15:30'], [1714, '15:45'], [1778, '16:00'], [1825, '16:21']];
const LEFT = 3, RIGHT = 1836;

function gridLines(top, bottom, rows) {
  const xs = TIMES.map(([x]) => x);
  return `<g shape-rendering="crispEdges" stroke="#8a8a8a" stroke-opacity=".4">
    <path stroke-dasharray="1 5" d="${xs.map(x => `M${x}.5 ${top}V${bottom}`).join('')}${rows.map(y => `M${LEFT} ${y}.5H${RIGHT}`).join('')}"/>
    <path d="${xs.map(x => `M${x}.5 ${top}v5M${x}.5 ${bottom}v-5`).join('')}${rows.map(y => `M${LEFT} ${y}.5h5M${RIGHT} ${y}.5h-5`).join('')}"/></g>`;
}

// ---- elements ---------------------------------------------------------
class TitleBar extends HTMLElement {
  constructor() {
    super();
    this.attachShadow({ mode: 'open' }).innerHTML = `
      <style>${BASE}
        :host { display: flex; align-items: center; height: 23px; padding: 0 2px; background: #fff; color: #000; font-size: 12px; }
        h1 { flex: 1; margin: 0 0 0 4px; font: inherit; font-family: Roboto, "Open Sans", sans-serif; }
        button { display: grid; place-items: center; width: 46px; height: 23px; }
      </style>
      ${icon('logo', 16)}<h1><slot></slot></h1>
      <button aria-label="Minimize">${icon('min')}</button>
      <button aria-label="Restore">${icon('restore', 11)}</button>
      <button aria-label="Close">${icon('close', 11)}</button>`;
  }
}
customElements.define('title-bar', TitleBar);

class WorkspaceTabs extends HTMLElement {
  constructor() {
    super();
    this.attachShadow({ mode: 'open' }).innerHTML = `
      <style>${BASE}
        :host { display: flex; align-items: stretch; height: 20px; background: #4a4a4a; color: #ddd; }
        .tab { display: flex; align-items: center; gap: 5px; margin: 3px 3px 3px 4px; padding: 0 6px; background: #0a0a0a; border-radius: 4px; height: 14px; line-height: 14px; }
        .rule { width: 1px; background: #5e5e5e; }
        .space { flex: 1; }
        .tool { position: relative; display: grid; place-items: center; width: 31px; border-left: 1px solid #606060; }
        .layout { width: 59px; justify-content: start; padding-left: 9px; }
        .layout i { width: 24px; height: 16px; border: 1px solid #bbb; }
        .more::after { content: ""; position: absolute; right: 2px; bottom: 1px; border: 2px solid; border-color: transparent #ddd #ddd transparent; }
      </style>
      <button class="tab">${icon('bars', 11)}<slot></slot></button><span class="rule"></span>
      <span class="space"></span>
      <button class="tool layout more" aria-label="Layout"><i></i></button>
      <button class="tool" aria-label="Pin">${icon('pin', 10)}</button>
      <button class="tool more" aria-label="Menu">${icon('menu', 10)}</button>`;
  }
}
customElements.define('workspace-tabs', WorkspaceTabs);

class ToolButton extends HTMLElement {
  connectedCallback() {
    const name = this.getAttribute('icon');
    this.attachShadow({ mode: 'open' }).innerHTML = `
      <style>${BASE}
        :host { display: flex; border-left: 1px solid #1c5270; color: #dce4e8; }
        button { position: relative; display: flex; align-items: center; gap: 5px; padding: 0 9px 0 8px; }
        :host([more]) button::after { content: ""; position: absolute; right: 2px; bottom: 1px; border: 2px solid; border-color: transparent #dce4e8 #dce4e8 transparent; }
        :host([compact]) button { width: 30px; padding: 0; justify-content: center; }
        :host([small]) button { width: 35px; padding: 0; justify-content: center; font-size: 8px; font-weight: 700; }
      </style>
      <button aria-label="${this.getAttribute('label') || this.textContent}">${name ? icon(name, this.hasAttribute('compact') ? 11 : 12) : ''}<slot></slot></button>`;
  }
}
customElements.define('tool-button', ToolButton);

class SymbolBar extends HTMLElement {
  constructor() {
    super();
    this.attachShadow({ mode: 'open' }).innerHTML = `
      <style>${BASE}
        :host { display: flex; align-items: stretch; height: 23px; padding: 2px 4px 1px 3px; background: #003b59; }
        .symbol { display: flex; align-self: center; width: 96px; height: 18px; border: 1px solid #666; border-radius: 2px; background: #111; color: #eee; }
        .symbol input { flex: 1; min-width: 0; padding-left: 6px; }
        .symbol button { display: grid; place-items: center; width: 17px; background: #4a4a4a; }
        .group { position: relative; align-self: center; margin: -1px 3px 0 4px; width: 8px; height: 11px; background: #c050cc; color: #23002a; border-radius: 2px; font-size: 10px; line-height: 11px; }
        .group::after { content: ""; position: absolute; right: -2px; bottom: -4px; border: 2px solid; border-color: transparent #ddd #ddd transparent; }
        .cell { display: flex; flex-direction: column; justify-content: center; border-left: 1px solid #1c5270; padding: 0 6px; }
        .name { padding: 0 11px 0 10px; color: #8b98a0; }
        .last { font-size: 14px; font-weight: 700; color: #eee; }
        .small { font-size: 9px; line-height: 10px; color: #c8ccd0; }
        .quote { color: #e0525c; border-right: 1px solid #1c5270; }
        .tools { display: flex; margin-left: auto; }
      </style>
      <div class="symbol"><input aria-label="Symbol" value="JFIN"><button aria-label="Symbol list">${icon('down', 8)}</button></div>
      <button class="group" aria-label="Link group">9</button>
      <div class="cell name">JIAYIN GROUP INC ADR</div>
      <div class="cell last">7.12</div>
      <div class="cell small"><span>0</span><span>0.00%</span></div>
      <div class="cell small quote"><span>B: 7.30</span><span>A: 7.37</span></div>
      <div class="tools"><slot></slot></div>`;
  }
}
customElements.define('symbol-bar', SymbolBar);

class StudyHeader extends HTMLElement {
  constructor() {
    super();
    this.attachShadow({ mode: 'open' }).innerHTML = `
      <style>${BASE}
        :host { display: flex; height: 20px; border: 1px solid #666; background: #0a0a0a; }
        ::slotted(span) { padding: 2px 5px 0 3px; border-right: 1px solid #666; white-space: nowrap; }
      </style><slot></slot>`;
  }
}
customElements.define('study-header', StudyHeader);

class PriceChart extends HTMLElement {
  constructor() {
    super();
    this.attachShadow({ mode: 'open' });
    const lines = { black: '', red: '', cyan: '', magenta: '', tan: '', vwap: '' };
    let up = '', down = '', volume = '';
    const rect = (x, y, w, h) => `M${x} ${y}h${w}v${h}h-${w}z`;
    BLOCKS.forEach(b => {
      const px = v => b.x + v / b.kx;
      const py = v => b.y + v / b.ky;
      Object.keys(lines).forEach(key => {
        lines[key] += b[key].split(' ').map(p => {
          const [x, y] = p.split(',');
          return `${px(+x).toFixed(1)},${py(+y).toFixed(1)} `;
        }).join('');
      });
      b.candles.split(';').forEach(row => {
        const [side, ...n] = row.trim().split(' ');
        const x = Math.floor(px(+n[0]));
        const [hi, top, bot, lo] = n.slice(1).map(v => Math.round(py(+v)));
        const d = rect(x, hi, 1, Math.max(1, lo - hi)) + rect(x - 1, top, 3, Math.max(1, bot - top));
        if (side === 'g') up += d; else down += d;
      });
      b.volume.split(',').forEach(row => {
        const [x, top] = row.split(' ').map(Number);
        const y = Math.round(py(top));
        volume += rect(Math.round(px(x)) - 2, y, 4, 908 - y);
      });
    });
    const rows = Array.from({ length: 18 }, (_, i) => Math.round(94 + i * 46.6));
    this.shadowRoot.innerHTML = `
      <style>${BASE}
        :host { display: block; position: relative; min-height: 0; background: #585858; border-right: 1px solid #666; border-bottom: 1px solid #666; }
        svg { position: absolute; inset: 0; width: 100%; height: 100%; }
        .tag { position: absolute; left: 4px; top: 4px; padding: 2px 2px 3px; background: #003a36; color: #5d7572; font-weight: 700; }
        polyline { fill: none; stroke-width: 1; }
      </style>
      <svg viewBox="3 86 1833 821" preserveAspectRatio="none" role="img" aria-label="JFIN price chart">
        <path d="M23 86H129V908H23zM1778 86H1836V908H1778z" fill="#636363"/>
        ${gridLines(86, 907, rows)}
        <g shape-rendering="crispEdges">
          <path d="${volume}" fill="#375552"/>
          <path d="${up}" fill="#7a7a7a"/>
          <path d="${down}" fill="#000"/>
        </g>
        <polygon points="3,908 ${lines.black} 1836,908" fill="#000" fill-opacity=".31"/>
        <polyline points="${lines.black}" stroke="#000"/>
        <polyline points="${lines.red}" stroke="#b81f1f"/>
        <polyline points="${lines.cyan}" stroke="#25b5ad"/>
        <polyline points="${lines.magenta}" stroke="#c860c8"/>
        <polyline points="${lines.tan}" stroke="#c4b684"/>
        <polyline points="${lines.vwap}" stroke="#fff" stroke-dasharray="15 6"/>
      </svg>
      <div class="tag"><slot></slot></div>`;
  }
}
customElements.define('price-chart', PriceChart);

class SqueezeChart extends HTMLElement {
  constructor() {
    super();
    this.attachShadow({ mode: 'open' });
    const paths = { w: '', g: '', d: '', e: '' };
    HISTOGRAM.forEach(part => part.bars.split(',').forEach(row => {
      const [x, y] = row.slice(1).split(' ').map(Number);
      paths[row[0]] += `M${Math.floor(part.x + x / part.kx)}.5 1046V${Math.round(900 + y / 3)}`;
    }));
    let dots = '';
    SQUEEZE.forEach(([from, to]) => {
      for (let x = from; x <= to; x += 4.27) dots += `M${Math.round(x)} 1046.5h.01`;
    });
    this.shadowRoot.innerHTML = `
      <style>${BASE}
        :host { display: block; position: relative; min-height: 0; background: #585858; border-right: 1px solid #666; }
        svg { position: absolute; inset: 0; width: 100%; height: 100%; }
      </style>
      <svg viewBox="3 931 1833 203" preserveAspectRatio="none" role="img" aria-label="TTM Squeeze">
        ${gridLines(931, 1134, [972, 1009, 1046, 1083, 1120])}
        <g shape-rendering="crispEdges">
          <path d="${paths.w}" stroke="#fff"/><path d="${paths.g}" stroke="#7c7c7c"/>
          <path d="${paths.d}" stroke="#2e2e2e"/><path d="${paths.e}" stroke="#404040"/>
        </g>
        <path d="${dots}" stroke="#990000" stroke-width="5" stroke-linecap="round"/>
      </svg>`;
  }
}
customElements.define('squeeze-chart', SqueezeChart);

class ValueAxis extends HTMLElement {
  connectedCallback() {
    const ticks = this.getAttribute('ticks').split(' ');
    this.attachShadow({ mode: 'open' }).innerHTML = `
      <style>${BASE}
        :host { position: relative; display: flex; flex-direction: column; width: 60px; }
        .head { height: 22px; padding: 1px 0 0 5px; }
        .ticks { flex: 1; display: flex; flex-direction: column; justify-content: space-between; padding: 0 0 14px 2px; }
        :host([small]) .head { height: 18px; }
        :host([small]) .ticks { padding-bottom: 6px; }
        .mark { position: absolute; left: 2px; top: var(--mark); height: 14px; padding: 0 2px; line-height: 12px; border: 1px solid #888; border-radius: 4px; background: #0a0a0a; color: #eee; }
        :host([small]) .mark { background: #6a6a6a; border-color: #aaa; }
      </style>
      <div class="head">${this.hasAttribute('small') ? '' : icon('scale', 12)}</div>
      <div class="ticks">${ticks.map(t => `<span>${t}</span>`).join('')}</div>
      <div class="mark"><slot></slot></div>`;
  }
}
customElements.define('value-axis', ValueAxis);

class TimeAxis extends HTMLElement {
  constructor() {
    super();
    const cols = TIMES.map(([x], i) => `minmax(0, ${(i + 1 < TIMES.length ? TIMES[i + 1][0] : 1897) - x}fr)`);
    this.attachShadow({ mode: 'open' }).innerHTML = `
      <style>${BASE}
        :host { display: grid; grid-template-columns: 20fr ${cols.join(' ')}; align-items: center; height: 18px; }
        span { white-space: nowrap; }
      </style>
      <i></i>${TIMES.map(([, t]) => `<span>${t}</span>`).join('')}`;
  }
}
customElements.define('time-axis', TimeAxis);

class ChartFooter extends HTMLElement {
  constructor() {
    super();
    this.attachShadow({ mode: 'open' }).innerHTML = `
      <style>${BASE}
        :host { display: flex; height: 18px; border-bottom: 1px solid #555; color: #ddd; }
        .track { flex: 1; display: grid; grid-template-columns: 73fr 31fr 715fr 701fr 170fr; height: 14px; margin-top: 1px; background: #181818; }
        .track > * { display: flex; align-items: center; }
        .top { justify-content: center; height: 17px; margin-top: -1px; background: #4a4a4a; border: 1px solid #5e5e5e; border-bottom: 0; }
        .thumb { justify-content: center; background: #404040; color: #888; }
        .thumb i { width: 5px; height: 5px; background: #666; border-radius: 2px; }
        .ends { justify-content: flex-end; gap: 2px; }
        .tools { display: flex; align-items: center; gap: 4px; padding: 0 13px 2px 2px; }
        .set { position: relative; padding: 0 9px 2px 0; white-space: nowrap; }
        .set::after { content: ""; position: absolute; right: 1px; bottom: 0; border: 2px solid; border-color: transparent #ddd #ddd transparent; }
      </style>
      <div class="track">
        <button aria-label="Scroll left">${icon('left', 8)}</button>
        <button class="top" aria-label="Collapse">${icon('top', 11)}</button>
        <span></span><div class="thumb"><i></i></div>
        <div class="ends"><button aria-label="Back">${icon('left', 12)}</button><button aria-label="Forward">${icon('right', 12)}</button></div>
      </div>
      <div class="tools">
        ${[['expand', 'Expand'], ['cross', 'Crosshair'], ['zoomin', 'Zoom in'], ['zoomout', 'Zoom out'], ['hand', 'Pan']].map(([n, l]) => `<button aria-label="${l}">${icon(n, 12)}</button>`).join('')}
      </div>
      <button class="set">Drawing set: Default</button>`;
  }
}
customElements.define('chart-footer', ChartFooter);

class SideTabs extends HTMLElement {
  constructor() {
    super();
    const names = ['Trade', 'Times And Sales', 'Active Trader', 'Big Buttons', 'Chart', 'Phase Scores', 'Dashboard', 'Level II', 'Live News'];
    this.attachShadow({ mode: 'open' }).innerHTML = `
      <style>${BASE}
        :host { display: flex; flex-direction: column; width: 23px; background: #4a4a4a; border-left: 1px solid #5e5e5e; border-right: 1px solid #003b59; }
        button { writing-mode: vertical-rl; transform: rotate(180deg); padding: 7px 1px 11px 3px; border-top: 1px solid #666; color: #c8c8c8; line-height: 16px; text-align: center; }
        .on { background: #6a6a6a; }
      </style>
      ${names.map(n => `<button${n === 'Chart' ? ' class="on"' : ''}>${n}</button>`).join('')}`;
  }
}
customElements.define('side-tabs', SideTabs);

class TradeWindow extends HTMLElement {
  constructor() {
    super();
    this.attachShadow({ mode: 'open' }).innerHTML = `
      <style>${BASE}
        :host { display: flex; flex-direction: column; height: 100vh; background: #0a0a0a; }
        .body { flex: 1; display: flex; min-height: 0; border-left: 1px solid #003b59; }
        .work { flex: 1; display: flex; flex-direction: column; min-width: 0; }
        .pane { display: grid; grid-template: 20px minmax(0, 1fr) / minmax(0, 1fr) 60px; min-height: 0; padding-left: 2px; }
        .pane value-axis { grid-column: 2; grid-row: 1 / 3; }
        .price { flex: 842 1 0; margin-bottom: 3px; }
        .squeeze { flex: 223 1 0; }
        time-axis, chart-footer { margin-left: 2px; }
        .hi { color: #eee; }
        b { color: #fff; }
        .dim { color: #6d694e; }
        .low { color: #777; }
      </style>
      <title-bar>JFIN - Charts - 686109427TDA Main@thinkorswim [build 1969]</title-bar>
      <workspace-tabs>Charts</workspace-tabs>
      <symbol-bar>
        <tool-button icon="share">Share</tool-button>
        <tool-button icon="link" compact label="Detach"></tool-button>
        <tool-button icon="flask" compact label="Edit studies"></tool-button>
        <tool-button icon="gear" compact label="Settings"></tool-button>
        <tool-button small more>1m</tool-button>
        <tool-button icon="candles" more>Style</tool-button>
        <tool-button icon="hand" more>Drawings</tool-button>
        <tool-button icon="flask" more>Studies</tool-button>
        <tool-button icon="patterns" more>Patterns</tool-button>
        <tool-button icon="menu" compact more label="Menu"></tool-button>
      </symbol-bar>
      <div class="body">
        <div class="work">
          <section class="pane price">
            <study-header><span><b>JFIN 3 D 1m [NASDAQ]</b></span><span>D: 4/27/21, 8:25 AM</span><span>O: 7.32</span><span>H: 7.32</span><span>L: 7.31</span><span>C: 7.31</span><span>R: 0.01</span><span class="hi">Volume</span><span>300</span><span class="dim">xxx_emas</span><span class="hi">VWAP (-1.0, 1.0, MONTH)</span></study-header>
            <price-chart>Volume = N/A</price-chart>
            <value-axis style="--mark: 49.2%" ticks="9 8.8 8.6 8.4 8.2 8 7.8 7.6 7.4 7.2 7 6.8 6.6 6.4 6.2 6 5.8 5.6">7.31</value-axis>
          </section>
          <section class="pane squeeze">
            <study-header><span class="low">TTM_Squeeze (CLOSE, 18, 1.5, 2.0, 1.0)</span><span class="low">4.11836</span><span>&nbsp;&nbsp;</span></study-header>
            <squeeze-chart></squeeze-chart>
            <value-axis small style="--mark: 53.4%" ticks="60 40 20 0 -20 -40">4.11836</value-axis>
          </section>
          <time-axis></time-axis>
          <chart-footer></chart-footer>
        </div>
        <side-tabs></side-tabs>
      </div>`;
  }
}
customElements.define('trade-window', TradeWindow);
</script>
</body>
</html>
